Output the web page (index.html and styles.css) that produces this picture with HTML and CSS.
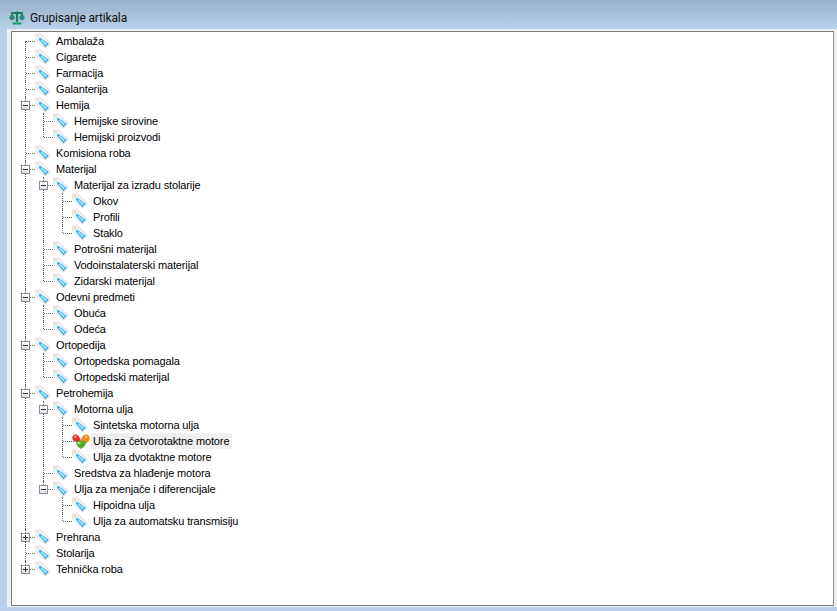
FILE: index.html
```html
<!DOCTYPE html>
<html lang="en">
<head>
  <meta charset="UTF-8" />
  <title>Grupisanje artikala</title>
  <link rel="stylesheet" href="styles.css">
</head>
<body>

<svg class="defs" width="0" height="0">
  <symbol id="tag" viewBox="0 0 16 16">
    <path d="M0.5 1.5 L5.5 1 L14.5 9.5 Q15 10.5 14.5 11.2 L11 14.5 Q10 15 9.2 14.5 L1 6.5 Z" fill="#f8f8f8" stroke="#dadada" stroke-width="1"/>
    <path d="M5 4.5 L13.8 10.8 L10.4 14.2 L3.6 6.6 Z" fill="#3fb0ee"/>
    <path d="M6.2 6.2 L12 10.6 L10.5 12.2 L5.6 7.2 Z" fill="#a8e2fb"/>
    <circle cx="3" cy="3.2" r="0.9" fill="#fff" stroke="#c4c4c4" stroke-width="0.6"/>
  </symbol>
</svg>

<div class="window">
  <div class="titlebar">
    <svg class="title-icon" width="16" height="14" viewBox="0 0 16 14">
      <path d="M8 0.5 V11 M2 2 H14" stroke="#1b7c63" stroke-width="2.2" fill="none"/>
      <path d="M0 7 Q3 11.5 6 7 L3 1.5 Z M10 7 Q13 11.5 16 7 L13 1.5 Z" fill="#2a8c72"/>
      <path d="M3.5 11.5 H12.5 V13.5 H3.5 Z" fill="#12a35e"/>
    </svg>
    <span class="title-text">Grupisanje artikala</span>
  </div>

  <div class="panel">
    <div class="tree">
      <ul class="nodes root">
        <li><div class="node"><svg class="icon"><use href="#tag"/></svg><span class="label">Ambalaža</span></div></li>
        <li><div class="node"><svg class="icon"><use href="#tag"/></svg><span class="label">Cigarete</span></div></li>
        <li><div class="node"><svg class="icon"><use href="#tag"/></svg><span class="label">Farmacija</span></div></li>
        <li><div class="node"><svg class="icon"><use href="#tag"/></svg><span class="label">Galanterija</span></div></li>
        <li><div class="node"><i class="toggle"></i><svg class="icon"><use href="#tag"/></svg><span class="label">Hemija</span></div>
          <ul class="nodes">
            <li><div class="node"><svg class="icon"><use href="#tag"/></svg><span class="label">Hemijske sirovine</span></div></li>
            <li><div class="node"><svg class="icon"><use href="#tag"/></svg><span class="label">Hemijski proizvodi</span></div></li>
          </ul>
        </li>
        <li><div class="node"><svg class="icon"><use href="#tag"/></svg><span class="label">Komisiona roba</span></div></li>
        <li><div class="node"><i class="toggle"></i><svg class="icon"><use href="#tag"/></svg><span class="label">Materijal</span></div>
          <ul class="nodes">
            <li><div class="node"><i class="toggle"></i><svg class="icon"><use href="#tag"/></svg><span class="label">Materijal za izradu stolarije</span></div>
              <ul class="nodes deep">
                <li><div class="node"><svg class="icon"><use href="#tag"/></svg><span class="label">Okov</span></div></li>
                <li><div class="node"><svg class="icon"><use href="#tag"/></svg><span class="label">Profili</span></div></li>
                <li><div class="node"><svg class="icon"><use href="#tag"/></svg><span class="label">Staklo</span></div></li>
              </ul>
            </li>
            <li><div class="node"><svg class="icon"><use href="#tag"/></svg><span class="label">Potrošni materijal</span></div></li>
            <li><div class="node"><svg class="icon"><use href="#tag"/></svg><span class="label">Vodoinstalaterski materijal</span></div></li>
            <li><div class="node"><svg class="icon"><use href="#tag"/></svg><span class="label">Zidarski materijal</span></div></li>
          </ul>
        </li>
        <li><div class="node"><i class="toggle"></i><svg class="icon"><use href="#tag"/></svg><span class="label">Odevni predmeti</span></div>
          <ul class="nodes">
            <li><div class="node"><svg class="icon"><use href="#tag"/></svg><span class="label">Obuća</span></div></li>
            <li><div class="node"><svg class="icon"><use href="#tag"/></svg><span class="label">Odeća</span></div></li>
          </ul>
        </li>
        <li><div class="node"><i class="toggle"></i><svg class="icon"><use href="#tag"/></svg><span class="label">Ortopedija</span></div>
          <ul class="nodes">
            <li><div class="node"><svg class="icon"><use href="#tag"/></svg><span class="label">Ortopedska pomagala</span></div></li>
            <li><div class="node"><svg class="icon"><use href="#tag"/></svg><span class="label">Ortopedski materijal</span></div></li>
          </ul>
        </li>
        <li><div class="node"><i class="toggle"></i><svg class="icon"><use href="#tag"/></svg><span class="label">Petrohemija</span></div>
          <ul class="nodes">
            <li><div class="node"><i class="toggle"></i><svg class="icon"><use href="#tag"/></svg><span class="label">Motorna ulja</span></div>
              <ul class="nodes deep">
                <li><div class="node"><svg class="icon"><use href="#tag"/></svg><span class="label">Sintetska motorna ulja</span></div></li>
                <li><div class="node">
                  <svg class="icon icon-wide" viewBox="0 0 18 16">
                    <path d="M9 8 C8 4 5.5 1 3 1.5 C0.5 2 -0.5 5 1 7 C2.5 9 6 9.5 9 10 Z" fill="#e2302a"/>
                    <path d="M8.5 9 C9 4 12 1 14.5 1.5 C17 2 18.3 4.5 17.3 7 C16.3 9.5 13 11 10 11.5 Z" fill="#f08a1c"/>
                    <path d="M9 16 C6.5 14.5 4.2 12.5 4.2 10 C4.2 7.5 7.5 6.5 9 8.5 C10.5 6.5 13.8 7.5 13.8 10 C13.8 12.5 11.5 14.5 9 16 Z" fill="#4fae2b"/>
                    <ellipse cx="7" cy="10" rx="1.6" ry="1.2" fill="#b6e88d"/>
                    <ellipse cx="14" cy="4" rx="1.4" ry="1" fill="#fbd08c"/>
                    <ellipse cx="3.2" cy="3.8" rx="1.3" ry="1" fill="#f4968c"/>
                  </svg>
                  <span class="label selected">Ulja za četvorotaktne motore</span></div></li>
                <li><div class="node"><svg class="icon"><use href="#tag"/></svg><span class="label">Ulja za dvotaktne motore</span></div></li>
              </ul>
            </li>
            <li><div class="node"><svg class="icon"><use href="#tag"/></svg><span class="label">Sredstva za hlađenje motora</span></div></li>
            <li><div class="node"><i class="toggle"></i><svg class="icon"><use href="#tag"/></svg><span class="label">Ulja za menjače i diferencijale</span></div>
              <ul class="nodes deep">
                <li><div class="node"><svg class="icon"><use href="#tag"/></svg><span class="label">Hipoidna ulja</span></div></li>
                <li><div class="node"><svg class="icon"><use href="#tag"/></svg><span class="label">Ulja za automatsku transmisiju</span></div></li>
              </ul>
            </li>
          </ul>
        </li>
        <li><div class="node"><i class="toggle closed"></i><svg class="icon"><use href="#tag"/></svg><span class="label">Prehrana</span></div></li>
        <li><div class="node"><svg class="icon"><use href="#tag"/></svg><span class="label">Stolarija</span></div></li>
        <li><div class="node"><i class="toggle closed"></i><svg class="icon"><use href="#tag"/></svg><span class="label">Tehnička roba</span></div></li>
      </ul>
    </div>
  </div>
</div>

</body>
</html>
```

FILE: styles.css
```css
html, body {
  margin: 0;
  padding: 0;
  height: 100%;
  overflow: hidden;
}

.defs {
  position: absolute;
}

.window {
  display: flex;
  flex-direction: column;
  height: 611px;
  box-sizing: border-box;
  padding-bottom: 4px;
  background: linear-gradient(#96b1ce 0, #b9d1ea 29px);
  font-family: "Liberation Sans", sans-serif;
  color: #000;
}

.titlebar {
  display: flex;
  align-items: center;
  gap: 5px;
  height: 29px;
  padding: 7px 0 0 9px;
  box-sizing: border-box;
  flex: none;
}

.title-text {
  font-family: "Roboto", sans-serif;
  font-size: 12px;
  letter-spacing: -0.15px;
  color: #111;
}

.panel {
  flex: 1;
  display: flex;
  margin-left: 7px;
  padding: 2px 3px 1px 4px;
  background: #f0f0f0;
}

.tree {
  flex: 1;
  background: #fff;
  border: 1px solid #777b82;
  border-right-color: #8f9298;
  padding: 1px 0 0 8px;
  overflow: hidden;
}

.nodes {
  list-style: none;
  margin: 0;
  padding: 0 0 0 18px;
}

.root {
  padding-left: 0;
}

.deep {
  padding-left: 19px;
}

.nodes li {
  position: relative;
}

/* dotted tree lines */
.nodes li::before {
  content: "";
  position: absolute;
  left: 5px;
  top: 0;
  bottom: 0;
  border-left: 1px dotted #666;
}

.nodes li:last-child::before {
  bottom: auto;
  height: 8px;
}

.root > li:first-child::before {
  top: 8px;
}

.node::before {
  content: "";
  position: absolute;
  left: 6px;
  top: 8px;
  width: 11px;
  border-top: 1px dotted #666;
}

.node {
  display: flex;
  align-items: center;
  height: 16px;
  padding-left: 15px;
  font-size: 11px;
  letter-spacing: -0.13px;
  line-height: 16px;
  white-space: nowrap;
}

.toggle {
  position: absolute;
  left: 1px;
  top: 4px;
  z-index: 1;
  width: 7px;
  height: 7px;
  border: 1px solid #8a8f96;
  background: linear-gradient(#fff, #dfe3e8);
}

.toggle::before {
  content: "";
  position: absolute;
  left: 1px;
  top: 3px;
  width: 5px;
  height: 1px;
  background: #333;
}

.toggle.closed::after {
  content: "";
  position: absolute;
  left: 3px;
  top: 1px;
  width: 1px;
  height: 5px;
  background: #333;
}

.icon {
  position: relative;
  width: 16px;
  height: 16px;
  flex: none;
  background: #fff;
}

.icon-wide {
  width: 18px;
  background: none;
}

.label {
  margin-left: 3px;
  padding: 0 2px;
}

.icon-wide + .label {
  margin-left: 1px;
}

.selected {
  background: #f0f0f0;
  padding-right: 3px;
}
```
